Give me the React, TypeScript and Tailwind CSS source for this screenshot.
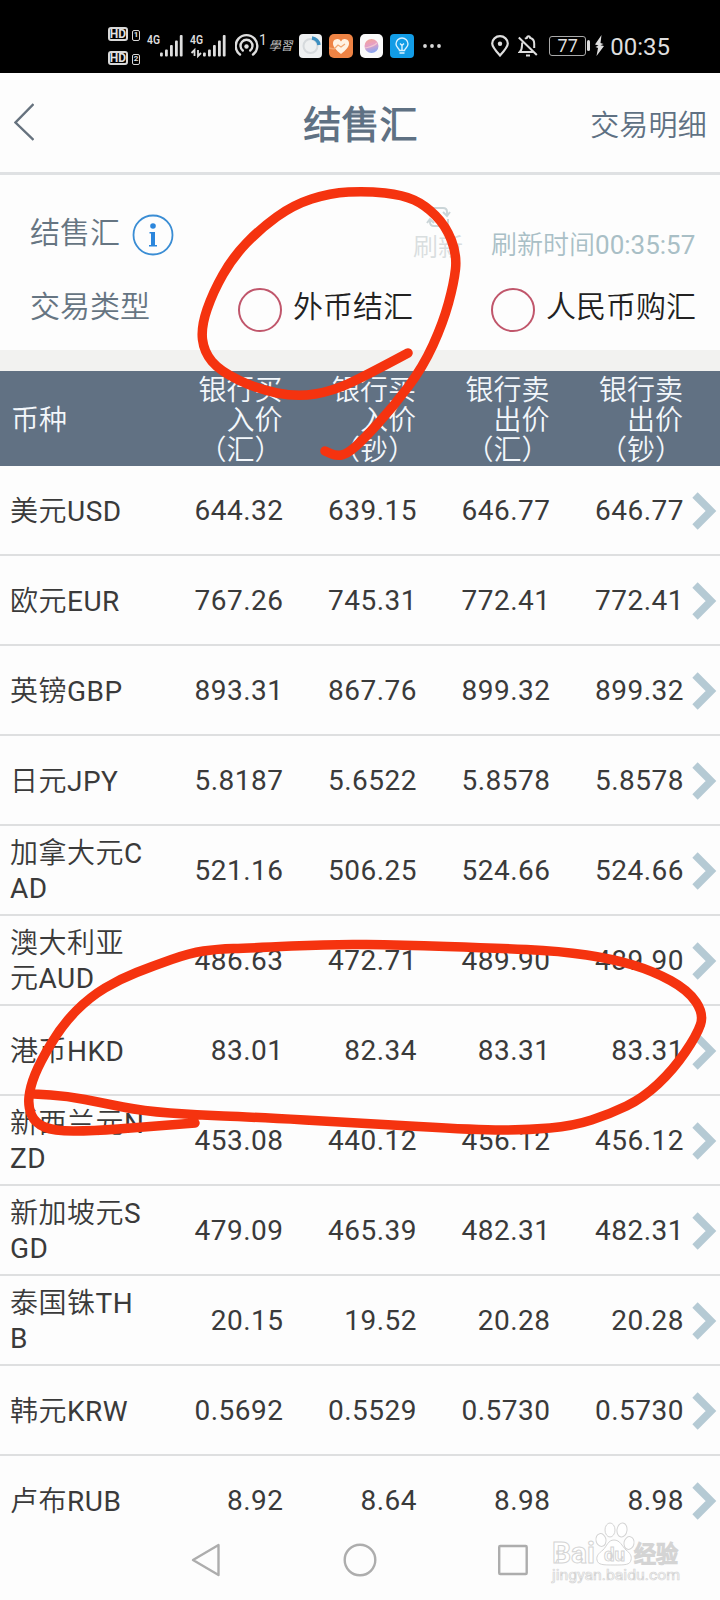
import React from 'react';

interface Rate {
  name: string;
  prices: string[];
}

const rates: Rate[] = [
  { name: '美元USD', prices: ['644.32', '639.15', '646.77', '646.77'] },
  { name: '欧元EUR', prices: ['767.26', '745.31', '772.41', '772.41'] },
  { name: '英镑GBP', prices: ['893.31', '867.76', '899.32', '899.32'] },
  { name: '日元JPY', prices: ['5.8187', '5.6522', '5.8578', '5.8578'] },
  { name: '加拿大元CAD', prices: ['521.16', '506.25', '524.66', '524.66'] },
  { name: '澳大利亚元AUD', prices: ['486.63', '472.71', '489.90', '489.90'] },
  { name: '港币HKD', prices: ['83.01', '82.34', '83.31', '83.31'] },
  { name: '新西兰元NZD', prices: ['453.08', '440.12', '456.12', '456.12'] },
  { name: '新加坡元SGD', prices: ['479.09', '465.39', '482.31', '482.31'] },
  { name: '泰国铢THB', prices: ['20.15', '19.52', '20.28', '20.28'] },
  { name: '韩元KRW', prices: ['0.5692', '0.5529', '0.5730', '0.5730'] },
  { name: '卢布RUB', prices: ['8.92', '8.64', '8.98', '8.98'] },
];

const columns = [
  ['银行买', '入价', '（汇）'],
  ['银行买', '入价', '（钞）'],
  ['银行卖', '出价', '（汇）'],
  ['银行卖', '出价', '（钞）'],
];

type Point = [number, number];

// Pen strokes drawn over the page
const topStroke: Point[] = [
  [408, 353], [367, 375], [333, 391], [297, 397], [257, 389], [220, 371], [204, 352], [201, 327],
  [213, 292], [233, 257], [260, 229], [293, 205], [330, 193], [367, 191], [403, 195], [425, 205],
  [446, 226], [457, 255], [454, 283], [443, 323], [423, 367], [393, 407], [363, 440], [347, 454],
  [336, 456], [325, 451],
];

const rowStroke: Point[] = [
  [195, 1123], [143, 1127], [93, 1131], [54, 1131], [35, 1123], [28, 1107], [30, 1087], [40, 1062],
  [63, 1024], [90, 997], [120, 979], [153, 966], [190, 953], [217, 949], [250, 948], [333, 944],
  [400, 945], [493, 948], [560, 951], [613, 959], [653, 971], [688, 990], [704, 1014], [697, 1035],
  [673, 1070], [643, 1098], [610, 1114], [573, 1126], [527, 1130], [477, 1130], [360, 1123], [250, 1117],
  [197, 1115], [143, 1111], [103, 1103], [67, 1096], [34, 1094],
];

// Each point bends the line, the joins are halfway between points
function smoothPath(points: Point[]): string {
  const last = points[points.length - 1];
  let d = `M${points[0][0]} ${points[0][1]}`;
  for (let i = 1; i < points.length - 1; i++) {
    const [x, y] = points[i];
    const [nx, ny] = points[i + 1];
    d += ` Q${x} ${y} ${(x + nx) / 2} ${(y + ny) / 2}`;
  }
  return `${d} L${last[0]} ${last[1]}`;
}

function HdBadge({ sim }: { sim: string }) {
  return (
    <div className="flex items-end gap-1">
      <span className="flex h-[14px] w-5 items-center justify-center rounded-[3px] border-2 border-[#d8d8d8] text-[12px] leading-none font-bold text-[#e0e0e0]">
        HD
      </span>
      <span className="flex h-[11px] w-2 items-center justify-center rounded-[2px] border border-[#d8d8d8] text-[8px] leading-none font-bold text-[#e0e0e0]">
        {sim}
      </span>
    </div>
  );
}

function Signal({ data }: { data?: boolean }) {
  return (
    <svg className="overflow-visible" width="36" height="24" viewBox="0 0 36 24" fill="#dedede">
      <text x="0" y="10" fontSize="12.5" fontWeight="600" textLength="13" lengthAdjust="spacingAndGlyphs">4G</text>
      <rect x="13" y="18.5" width="2.8" height="4" rx="1" />
      <rect x="18" y="15.5" width="2.8" height="7" rx="1" />
      <rect x="23" y="11" width="2.8" height="11.5" rx="1" />
      <rect x="28" y="6.5" width="2.8" height="16" rx="1" />
      <rect x="32.8" y="1" width="2.8" height="21.5" rx="1" />
      {data && (
        <path d="M4.5 22V16L1.5 19M8 16v6l3-3" fill="none" stroke="#dedede" strokeWidth="1.8" />
      )}
    </svg>
  );
}

function StatusBar() {
  return (
    <div className="flex h-[73px] items-center justify-between bg-black pr-[50px] pl-[108px] pt-[18px]">
      <div className="flex items-center">
        <div className="flex flex-col gap-[10px]">
          <HdBadge sim="1" />
          <HdBadge sim="2" />
        </div>
        <div className="ml-[7px] flex gap-[7px]">
          <Signal />
          <Signal data />
        </div>
        <svg className="ml-[9px]" width="33" height="26" viewBox="0 0 33 26" fill="none" stroke="#dedede" strokeWidth="2.4" strokeLinecap="round">
          <path d="M5 21.5A10.8 10.8 0 1 1 18 21.5" />
          <path d="M7.8 17.5A6 6 0 1 1 15.2 17.5" />
          <circle cx="11.5" cy="13.5" r="2.2" fill="#dedede" stroke="none" />
          <text x="24" y="12" fontSize="14" fill="#dedede" stroke="none">1</text>
        </svg>
        <span className="flex h-6 w-[27px] -skew-x-12 items-center justify-center text-[12px] leading-none text-[#cfcfcf]">學習</span>
        <div className="ml-1 flex gap-[7px]">
          <svg width="23" height="24" viewBox="0 0 23 24">
            <rect width="23" height="24" rx="4" fill="#eef0f1" />
            <circle cx="11.5" cy="12" r="7" fill="none" stroke="#d6dadd" strokeWidth="2" />
            <path d="M13 4a8 8 0 0 1 7 7" fill="none" stroke="#3d8fc0" strokeWidth="3.5" />
          </svg>
          <svg width="24" height="24" viewBox="0 0 24 24">
            <rect width="24" height="24" rx="5" fill="#ee8344" />
            <path d="M12 20C7 16 4 13 4 9.500a4.200 4.200 0 0 1 8-2 4.200 4.200 0 0 1 8 2C20 13 17 16 12 20z" fill="#fff3e4" />
            <path d="M0 14l5 1 4-4 3 2 4-3" fill="none" stroke="#f2a873" strokeWidth="1.3" />
          </svg>
          <svg width="23" height="24" viewBox="0 0 23 24">
            <defs>
              <linearGradient id="orb" x1="0" y1="0" x2="0.3" y2="1">
                <stop offset="0" stopColor="#f4a58e" />
                <stop offset="0.5" stopColor="#e79fc4" />
                <stop offset="1" stopColor="#8fa6ee" />
              </linearGradient>
            </defs>
            <rect width="23" height="24" rx="5" fill="#fafafa" />
            <circle cx="11.500" cy="12" r="7" fill="url(#orb)" />
            <path d="M5 14c4-1 8-1 12-5" fill="none" stroke="#f3c6cf" strokeWidth="1.2" />
          </svg>
          <svg width="24" height="24" viewBox="0 0 24 24" fill="none" stroke="#d9f1ff" strokeWidth="1.4">
            <rect width="24" height="24" rx="4" fill="#129ce6" stroke="none" />
            <path d="M9.500 16.500c0-2-3.500-3-3.500-6.500a6 6 0 0 1 12 0c0 3.500-3.500 4.500-3.500 6.500zM9.500 19h5M12 16v-5M10 9.500l2 2 2-2" />
          </svg>
        </div>
        <svg className="ml-[9px]" width="18" height="4" viewBox="0 0 18 4" fill="#d8d8d8">
          <circle cx="2" cy="2" r="1.900" />
          <circle cx="9" cy="2" r="1.900" />
          <circle cx="16" cy="2" r="1.900" />
        </svg>
      </div>
      <div className="flex items-center">
        <svg width="18" height="22" viewBox="0 0 18 22" fill="none" stroke="#dedede" strokeWidth="2.200">
          <path d="M9 20.500C4.500 15.500 1.200 12 1.200 8.500a7.800 7.300 0 0 1 15.600 0c0 3.500-3.300 7-7.800 12z" />
          <circle cx="9" cy="8.800" r="2.200" fill="#dedede" stroke="none" />
        </svg>
        <svg className="ml-[9px]" width="20" height="22" viewBox="0 0 20 22" fill="none" stroke="#dedede" strokeWidth="2">
          <path d="M.8 2.500l18 17.500M7 3.800C8 3 8.500 3 9 2.800c0-2.200 3-2.200 3 0 3 .8 4.200 3 4.200 5.700v4.500M4.200 7.500c-.4 4 .3 7-2.400 9.500h13M8 20.500h4" />
        </svg>
        <div className="ml-[11px] flex h-5 w-[37px] items-center justify-center rounded-[3px] border border-[#a9a9a9] text-[18px] leading-none text-[#dedede]">
          77
        </div>
        <div className="ml-[1px] h-[11px] w-[3px] rounded-sm bg-[#dedede]" />
        <svg className="ml-[5px]" width="9" height="21" viewBox="0 0 9 21" fill="#dedede">
          <path d="M6.500 0L0 9.500l3.500 1L.5 12l2.500 1-1.500 8L9 11l-3.500-.8L8.500 9 5.500 8z" />
        </svg>
        <span className="mt-[2px] ml-[6px] text-[24px] leading-none text-[#dedede]">00:35</span>
      </div>
    </div>
  );
}

function TitleBar() {
  return (
    <div className="flex h-[102px] items-center justify-between border-b-[3px] border-[#dfe1e3] pr-[13px] pl-[14px] text-[#5f7183]">
      <svg className="-mt-[2px]" width="20" height="38" viewBox="0 0 20 38" fill="none" stroke="#66727e" strokeWidth="2.400">
        <path d="M19.500 1L1.500 19.500 19.500 37" />
      </svg>
      <h1 className="mt-[5px] ml-[97px] text-[38px] leading-none font-bold">结售汇</h1>
      <span className="mt-[8px] text-[29px] leading-none tracking-[0.2px]">交易明细</span>
    </div>
  );
}

function Radio({ label }: { label: string }) {
  return (
    <label className="flex items-center leading-none text-[#222]">
      <span className="mt-[6px] mr-[11px] h-11 w-11 rounded-full border-2 border-[#c0566b]" />
      {label}
    </label>
  );
}

function TradePanel() {
  return (
    <div className="flex h-[175px] flex-col pt-[26px] pl-[30px] text-[30px] leading-none text-[#667582]">
      <div className="flex h-[68px] items-center">
        <span className="-mt-[5px]">结售汇</span>
        <svg className="ml-3" width="42" height="42" viewBox="0 0 42 42">
          <circle cx="21" cy="21" r="19.500" fill="none" stroke="#3a8dd4" strokeWidth="1.800" />
          <circle cx="21" cy="12" r="2.800" fill="#2b86dc" />
          <path d="M17.500 18h5.500v13h2v1.500h-8V31h2V19.500h-1.500z" fill="#2b86dc" />
        </svg>
        <div className="-mt-[7px] ml-[239px] flex flex-col items-center text-[25px] text-[#d9dedf]">
          <svg width="25" height="26" viewBox="0 0 25 26" fill="none" stroke="#cbd5d8" strokeWidth="2">
            <path d="M3 11V8q0-4 4-4h10q4 0 4 4v3M17 8l4 4 3-4M22 15v3q0 4-4 4H8q-4 0-4-4v-2M1 19l3-4 4 4" />
          </svg>
          <span className="mt-[5px]">刷新</span>
        </div>
        <span className="mt-[19px] ml-[28px] text-[26px] text-[#a9bfc6]">刷新时间00:35:57</span>
      </div>
      <div className="mt-[13px] flex h-[50px] items-center">
        <span>交易类型</span>
        <div className="ml-[88px]">
          <Radio label="外币结汇" />
        </div>
        <div className="ml-[78px]">
          <Radio label="人民币购汇" />
        </div>
      </div>
    </div>
  );
}

function RateTable() {
  return (
    <div className="text-[28px] tracking-[0.5px]">
      <div className="flex h-[95px] items-center bg-[#617183] pt-[4px] pl-[11px] leading-[30px] tracking-normal text-[#f3f7fb]">
        <span className="w-[138px]">币种</span>
        {columns.map((lines, i) => (
          <div key={i} className="w-[133.500px] text-right">
            {lines.map((line) => (
              <div key={line}>{line}</div>
            ))}
          </div>
        ))}
      </div>
      {rates.map((rate) => (
        <div key={rate.name} className="flex h-[90px] items-center border-b-2 border-[#dedfe0] pt-[2px] pl-[10px] text-[#3a3a3a] last:border-transparent">
          <span className="w-[140px] leading-[35px] break-all">
            {rate.name}
          </span>
          {rate.prices.map((price, i) => (
            <span key={i} className="w-[133.500px] text-right">{price}</span>
          ))}
          <svg className="ml-[8px] shrink-0" width="25" height="38" viewBox="0 0 25 38" fill="none" stroke="#b5cad4" strokeWidth="7.500">
            <path d="M3 3L19 19 3 35" />
          </svg>
        </div>
      ))}
    </div>
  );
}

function NavBar() {
  return (
    <div className="-mt-[3px] flex h-[57px] items-start">
      <svg className="ml-[191px]" width="30" height="34" viewBox="0 0 30 34" fill="none" stroke="#adadad" strokeWidth="2.400" strokeLinejoin="round">
        <path d="M27.500 2v30L2 17z" />
      </svg>
      <svg className="ml-[122px]" width="34" height="34" viewBox="0 0 34 34" fill="none" stroke="#adadad" strokeWidth="2.400">
        <circle cx="17" cy="17" r="15.300" />
      </svg>
      <svg className="ml-[119px]" width="34" height="34" viewBox="0 0 34 34" fill="none" stroke="#adadad" strokeWidth="2.400">
        <rect x="3.200" y="3" width="27.500" height="28" rx="1" />
      </svg>
    </div>
  );
}

function Watermark() {
  return (
    <svg className="absolute top-[1518px] left-[548px]" width="140" height="72" viewBox="0 0 140 72" fill="#fff" stroke="#d4d4d4" strokeWidth="1">
      <text x="4" y="45" fontSize="30" fontWeight="bold" textLength="43" lengthAdjust="spacingAndGlyphs">Bai</text>
      <ellipse cx="53" cy="22" rx="5" ry="6.500" transform="rotate(-12 53 22)" />
      <ellipse cx="62" cy="12" rx="5" ry="7" />
      <ellipse cx="74" cy="12" rx="5" ry="7" transform="rotate(8 74 12)" />
      <ellipse cx="81" cy="25" rx="5" ry="6.500" transform="rotate(12 81 25)" />
      <path d="M66 22c6 0 8 6 12 10 4 3 6 6 5 10-1 5-6 5-17 5s-16 0-17-5c-1-4 2-7 6-10 4-4 5-10 11-10z" />
      <text x="56" y="43" fontSize="19" fontWeight="bold" textLength="21" lengthAdjust="spacingAndGlyphs">du</text>
      <text x="86" y="44" fontSize="23" fontWeight="bold" textLength="44" lengthAdjust="spacingAndGlyphs">经验</text>
      <text x="4" y="62" fontSize="15" strokeWidth="0.700" textLength="128" lengthAdjust="spacingAndGlyphs">jingyan.baidu.com</text>
    </svg>
  );
}

export default function App() {
  return (
    <div className="relative h-[1600px] w-[720px] overflow-hidden bg-[#fdfdfd] font-['Roboto','Noto_Sans_CJK_SC_DemiLight','Noto_Sans_CJK_SC',sans-serif]">
      <StatusBar />
      <TitleBar />
      <TradePanel />
      <div className="h-[21px] bg-[#f2f2f0]" />
      <RateTable />
      <NavBar />
      <svg
        className="pointer-events-none absolute inset-0"
        width="720"
        height="1600"
        viewBox="0 0 720 1600"
        fill="none"
        stroke="#f5330f"
        strokeWidth="9.500"
        strokeLinecap="round"
        strokeLinejoin="round"
      >
        <path d={smoothPath(topStroke)} />
        <path d={smoothPath(rowStroke)} />
      </svg>
      <Watermark />
    </div>
  );
}
